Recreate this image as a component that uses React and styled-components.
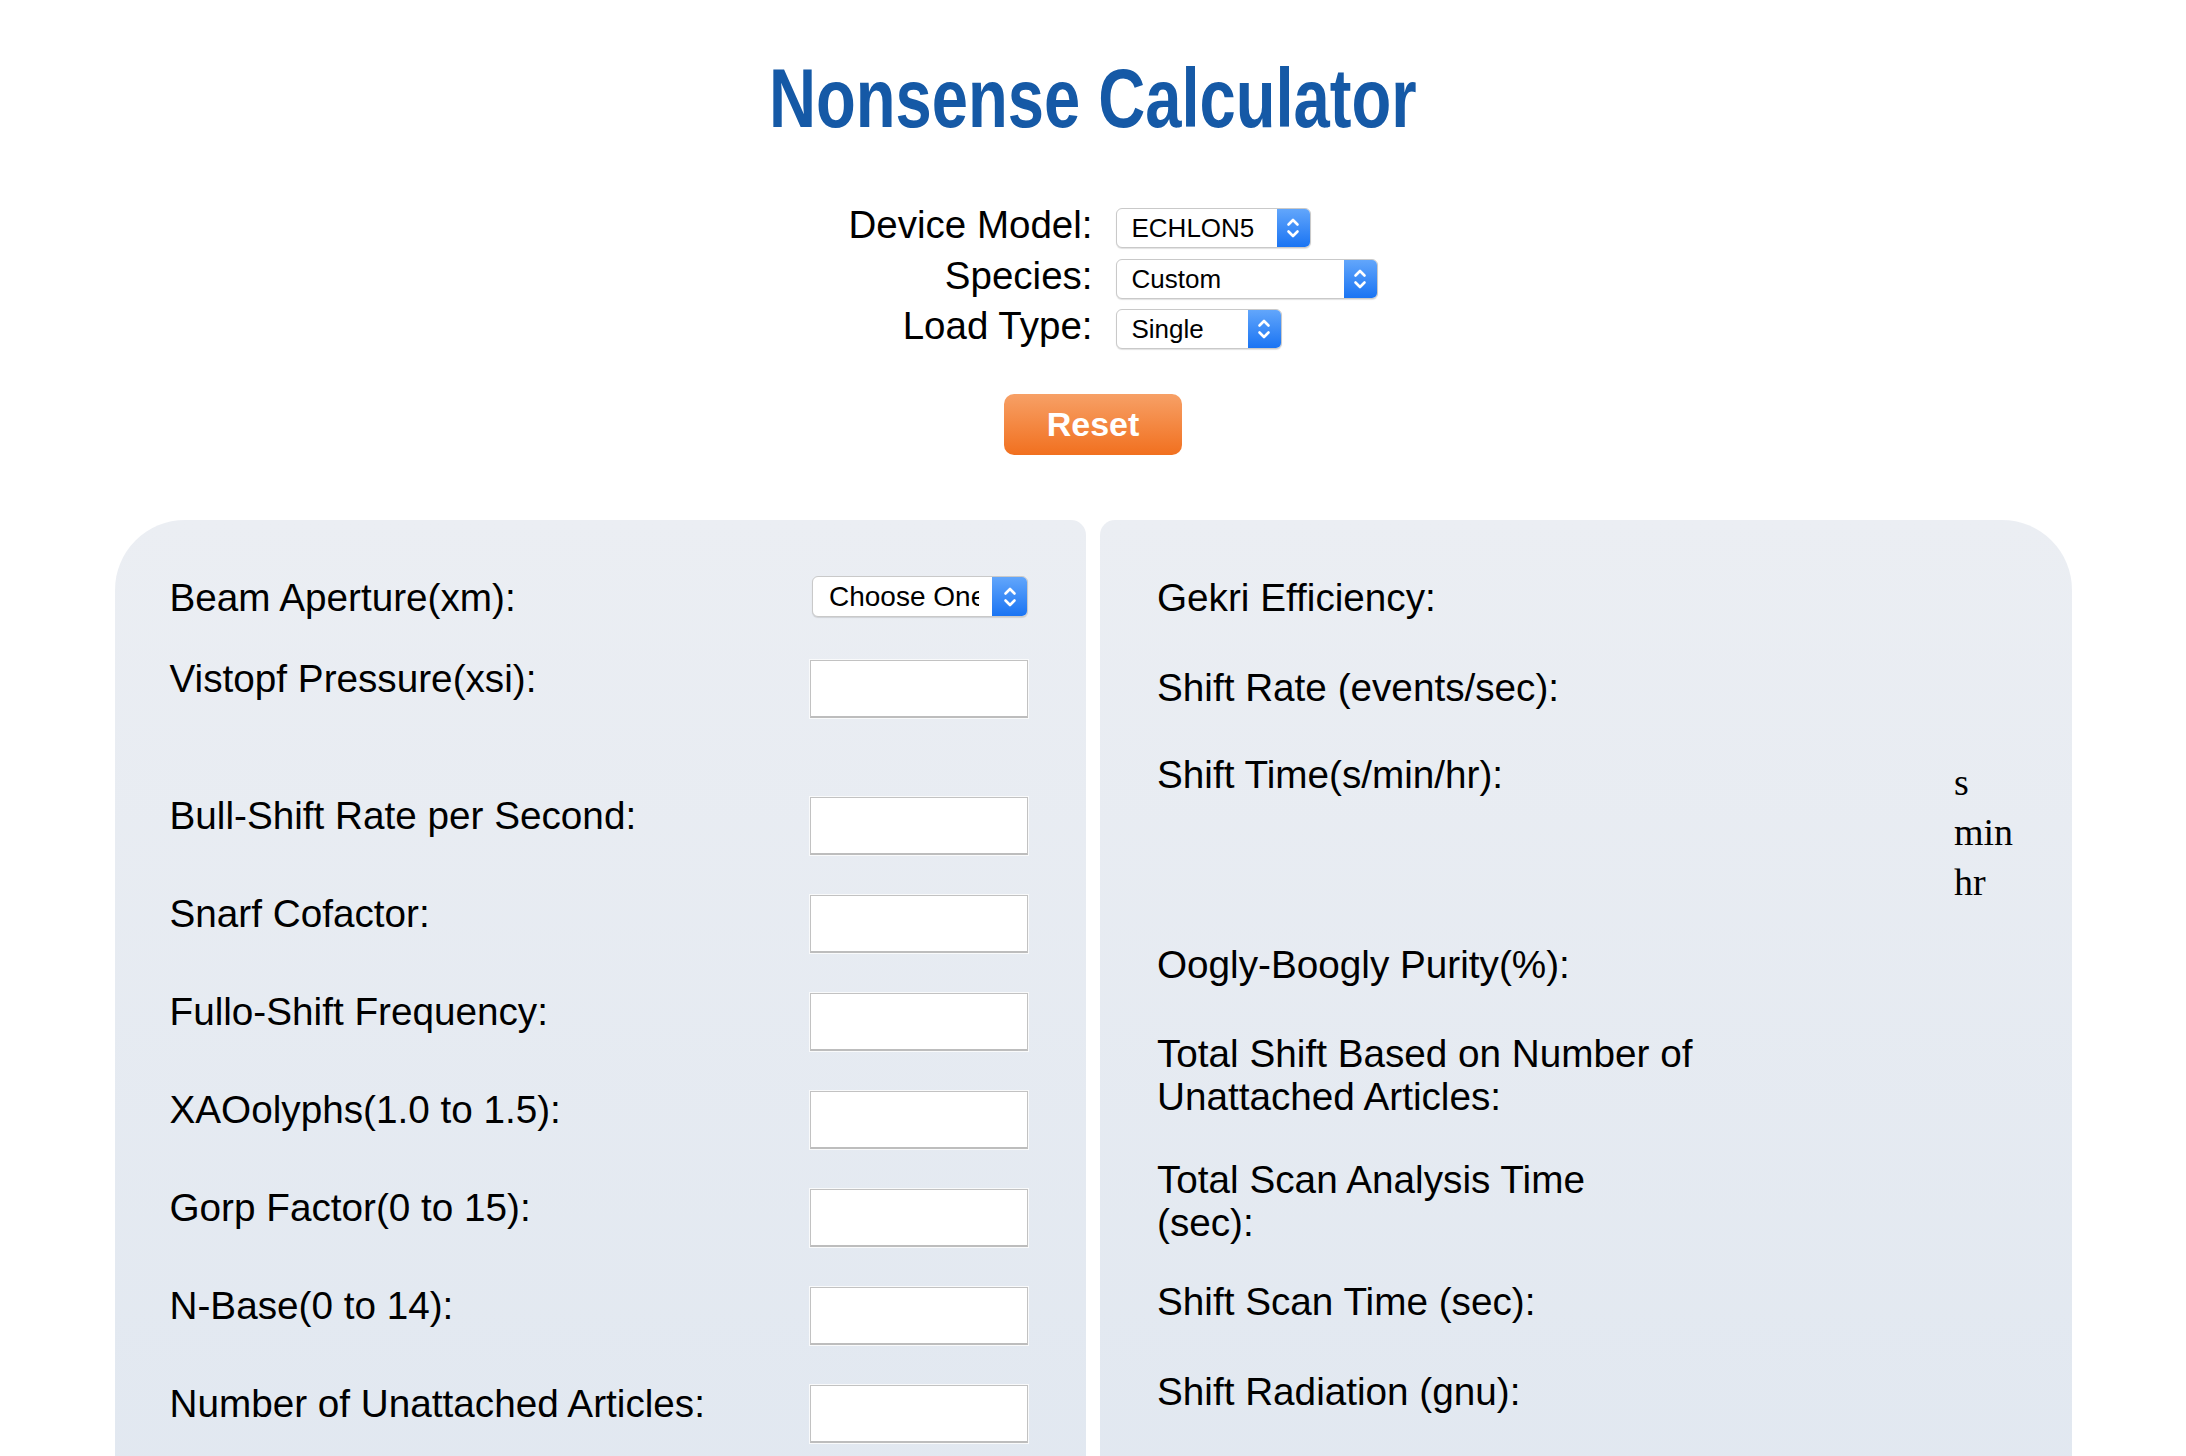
import React from 'react';
import styled, { createGlobalStyle } from 'styled-components';

const GlobalStyle = createGlobalStyle`
  html, body {
    margin: 0;
    padding: 0;
    background: #ffffff;
  }
  body {
    font-family: "Liberation Sans", Arial, sans-serif;
    color: #000;
  }
`;

const Page = styled.div`
  width: 2186px;
  padding-top: 56px;
`;

const TitleWrap = styled.div`
  display: flex;
  justify-content: center;
  height: 84px;
`;

const Title = styled.h1`
  margin: 0;
  font-family: "Liberation Sans", Arial, sans-serif;
  font-weight: bold;
  font-size: 84px;
  line-height: 84px;
  color: #1559a6;
  white-space: nowrap;
  transform: scaleX(0.775);
  transform-origin: center;
`;

const SettingsGrid = styled.div`
  display: grid;
  grid-template-columns: 1fr 1fr;
  column-gap: 23px;
  row-gap: 10.5px;
  padding-left: 22px;
  margin-top: 68px;
  align-items: center;
`;

const SettingLabel = styled.div`
  text-align: right;
  font-size: 38.5px;
  line-height: 34px;
  padding-bottom: 6px;
  white-space: nowrap;
`;

const SelectBox = styled.div`
  display: flex;
  align-items: stretch;
  width: ${p => p.$w}px;
  height: ${p => p.$h || 40}px;
  box-sizing: border-box;
  background: #fff;
  border: 1px solid #c9c9c9;
  border-radius: 6px;
  box-shadow: 0 1px 1px rgba(0, 0, 0, 0.12);
  overflow: hidden;
`;

const SelectText = styled.div`
  flex: 1;
  min-width: 0;
  margin-left: ${p => p.$pad || 15}px;
  margin-right: ${p => p.$clip || 4}px;
  font-size: ${p => p.$fs || 26}px;
  line-height: ${p => (p.$h || 40) - 2}px;
  white-space: nowrap;
  overflow: hidden;
  text-overflow: clip;
`;

const SelectArrow = styled.div`
  width: ${p => p.$aw || 33}px;
  flex-shrink: 0;
  display: flex;
  align-items: center;
  justify-content: center;
  background: linear-gradient(#62a6fb, #1a74f3);
`;

const Chevrons = () => (
  <svg width="14" height="24" viewBox="0 0 14 24" fill="none" stroke="#fff" strokeWidth="2.6" strokeLinecap="round" strokeLinejoin="round">
    <path d="M2.5 8.5 L7 4 L11.5 8.5" />
    <path d="M2.5 15.5 L7 20 L11.5 15.5" />
  </svg>
);

const Select = ({ value, w, h, fs, pad, aw, clip }) => (
  <SelectBox $w={w} $h={h}>
    <SelectText $h={h} $fs={fs} $pad={pad} $clip={clip}>{value}</SelectText>
    <SelectArrow $aw={aw}>
      <Chevrons />
    </SelectArrow>
  </SelectBox>
);

const ButtonRow = styled.div`
  display: flex;
  justify-content: center;
  margin-top: 45px;
`;

const ResetButton = styled.button`
  width: 178px;
  height: 61px;
  border: none;
  border-radius: 10px;
  background: linear-gradient(#f7a066, #f1701f);
  color: #fff;
  font-family: "Liberation Sans", Arial, sans-serif;
  font-weight: bold;
  font-size: 34px;
  padding: 0;
  cursor: pointer;
`;

const Panels = styled.div`
  display: grid;
  grid-template-columns: 1fr 1fr;
  column-gap: 14px;
  width: 1957px;
  margin: 65px auto 0;
`;

const Panel = styled.div`
  background: linear-gradient(#ebeef3, #e0e7f0);
  border-radius: ${p => (p.$side === 'left' ? '70px 15px 0 0' : '15px 70px 0 0')};
  padding: 56px ${p => (p.$side === 'left' ? '58px 40px 55px' : '40px 40px 57px')};
  min-height: 1000px;
`;

const FieldRow = styled.div`
  display: flex;
  align-items: flex-start;
  justify-content: space-between;
  margin-bottom: ${p => p.$mb}px;
`;

const Label = styled.div`
  font-size: 38.7px;
  line-height: 43px;
`;

const TextInput = styled.input`
  width: 218px;
  height: 58px;
  margin-top: ${p => p.$mt || 3}px;
  box-sizing: border-box;
  background: #fff;
  border: 1px solid #c2c2c2;
  border-bottom: 2px solid #bdbdbd;
  box-shadow: 0 0 0 1px #f9fafb;
  border-radius: 0;
  padding: 0 8px;
  font-size: 26px;
  flex-shrink: 0;
`;

const ResultRow = styled.div`
  display: flex;
  align-items: flex-start;
  margin-bottom: ${p => p.$mb}px;
`;

const ResultLabel = styled(Label)`
  width: 797px;
  flex-shrink: 0;
`;

const Units = styled.div`
  font-family: "Liberation Serif", "Times New Roman", serif;
  font-size: 38px;
  line-height: 50px;
  padding-top: 4px;
`;

const inputs = [
  { label: 'Vistopf Pressure(xsi):', mb: 76 },
  { label: 'Bull-Shift Rate per Second:', mb: 37 },
  { label: 'Snarf Cofactor:', mb: 37 },
  { label: 'Fullo-Shift Frequency:', mb: 37 },
  { label: 'XAOolyphs(1.0 to 1.5):', mb: 37 },
  { label: 'Gorp Factor(0 to 15):', mb: 37 },
  { label: 'N-Base(0 to 14):', mb: 37 },
  { label: 'Number of Unattached Articles:', mb: 37 },
];

const App = () => {
  return (
    <Page>
      <GlobalStyle />
      <TitleWrap>
        <Title>Nonsense Calculator</Title>
      </TitleWrap>

      <SettingsGrid>
        <SettingLabel>Device Model:</SettingLabel>
        <Select value="ECHLON5" w={195} />
        <SettingLabel>Species:</SettingLabel>
        <Select value="Custom" w={262} />
        <SettingLabel>Load Type:</SettingLabel>
        <Select value="Single" w={166} />
      </SettingsGrid>

      <ButtonRow>
        <ResetButton>Reset</ResetButton>
      </ButtonRow>

      <Panels>
        <Panel $side="left">
          <FieldRow $mb={38}>
            <Label>Beam Aperture(xm):</Label>
            <Select value="Choose One" w={216} h={41} fs={28} pad={16} aw={35} clip={13} />
          </FieldRow>
          {inputs.map(f => (
            <FieldRow key={f.label} $mb={f.mb}>
              <Label>{f.label}</Label>
              <TextInput type="text" />
            </FieldRow>
          ))}
        </Panel>

        <Panel $side="right">
          <ResultRow $mb={47}>
            <ResultLabel>Gekri Efficiency:</ResultLabel>
          </ResultRow>
          <ResultRow $mb={44}>
            <ResultLabel>Shift Rate (events/sec):</ResultLabel>
          </ResultRow>
          <ResultRow $mb={36}>
            <ResultLabel>Shift Time(s/min/hr):</ResultLabel>
            <Units>
              <div>s</div>
              <div>min</div>
              <div>hr</div>
            </Units>
          </ResultRow>
          <ResultRow $mb={46}>
            <ResultLabel>Oogly-Boogly Purity(%):</ResultLabel>
          </ResultRow>
          <ResultRow $mb={40}>
            <ResultLabel>Total Shift Based on Number of<br />Unattached Articles:</ResultLabel>
          </ResultRow>
          <ResultRow $mb={36}>
            <ResultLabel>Total Scan Analysis Time<br />(sec):</ResultLabel>
          </ResultRow>
          <ResultRow $mb={47}>
            <ResultLabel>Shift Scan Time (sec):</ResultLabel>
          </ResultRow>
          <ResultRow $mb={40}>
            <ResultLabel>Shift Radiation (gnu):</ResultLabel>
          </ResultRow>
        </Panel>
      </Panels>
    </Page>
  );
};

export default App;
